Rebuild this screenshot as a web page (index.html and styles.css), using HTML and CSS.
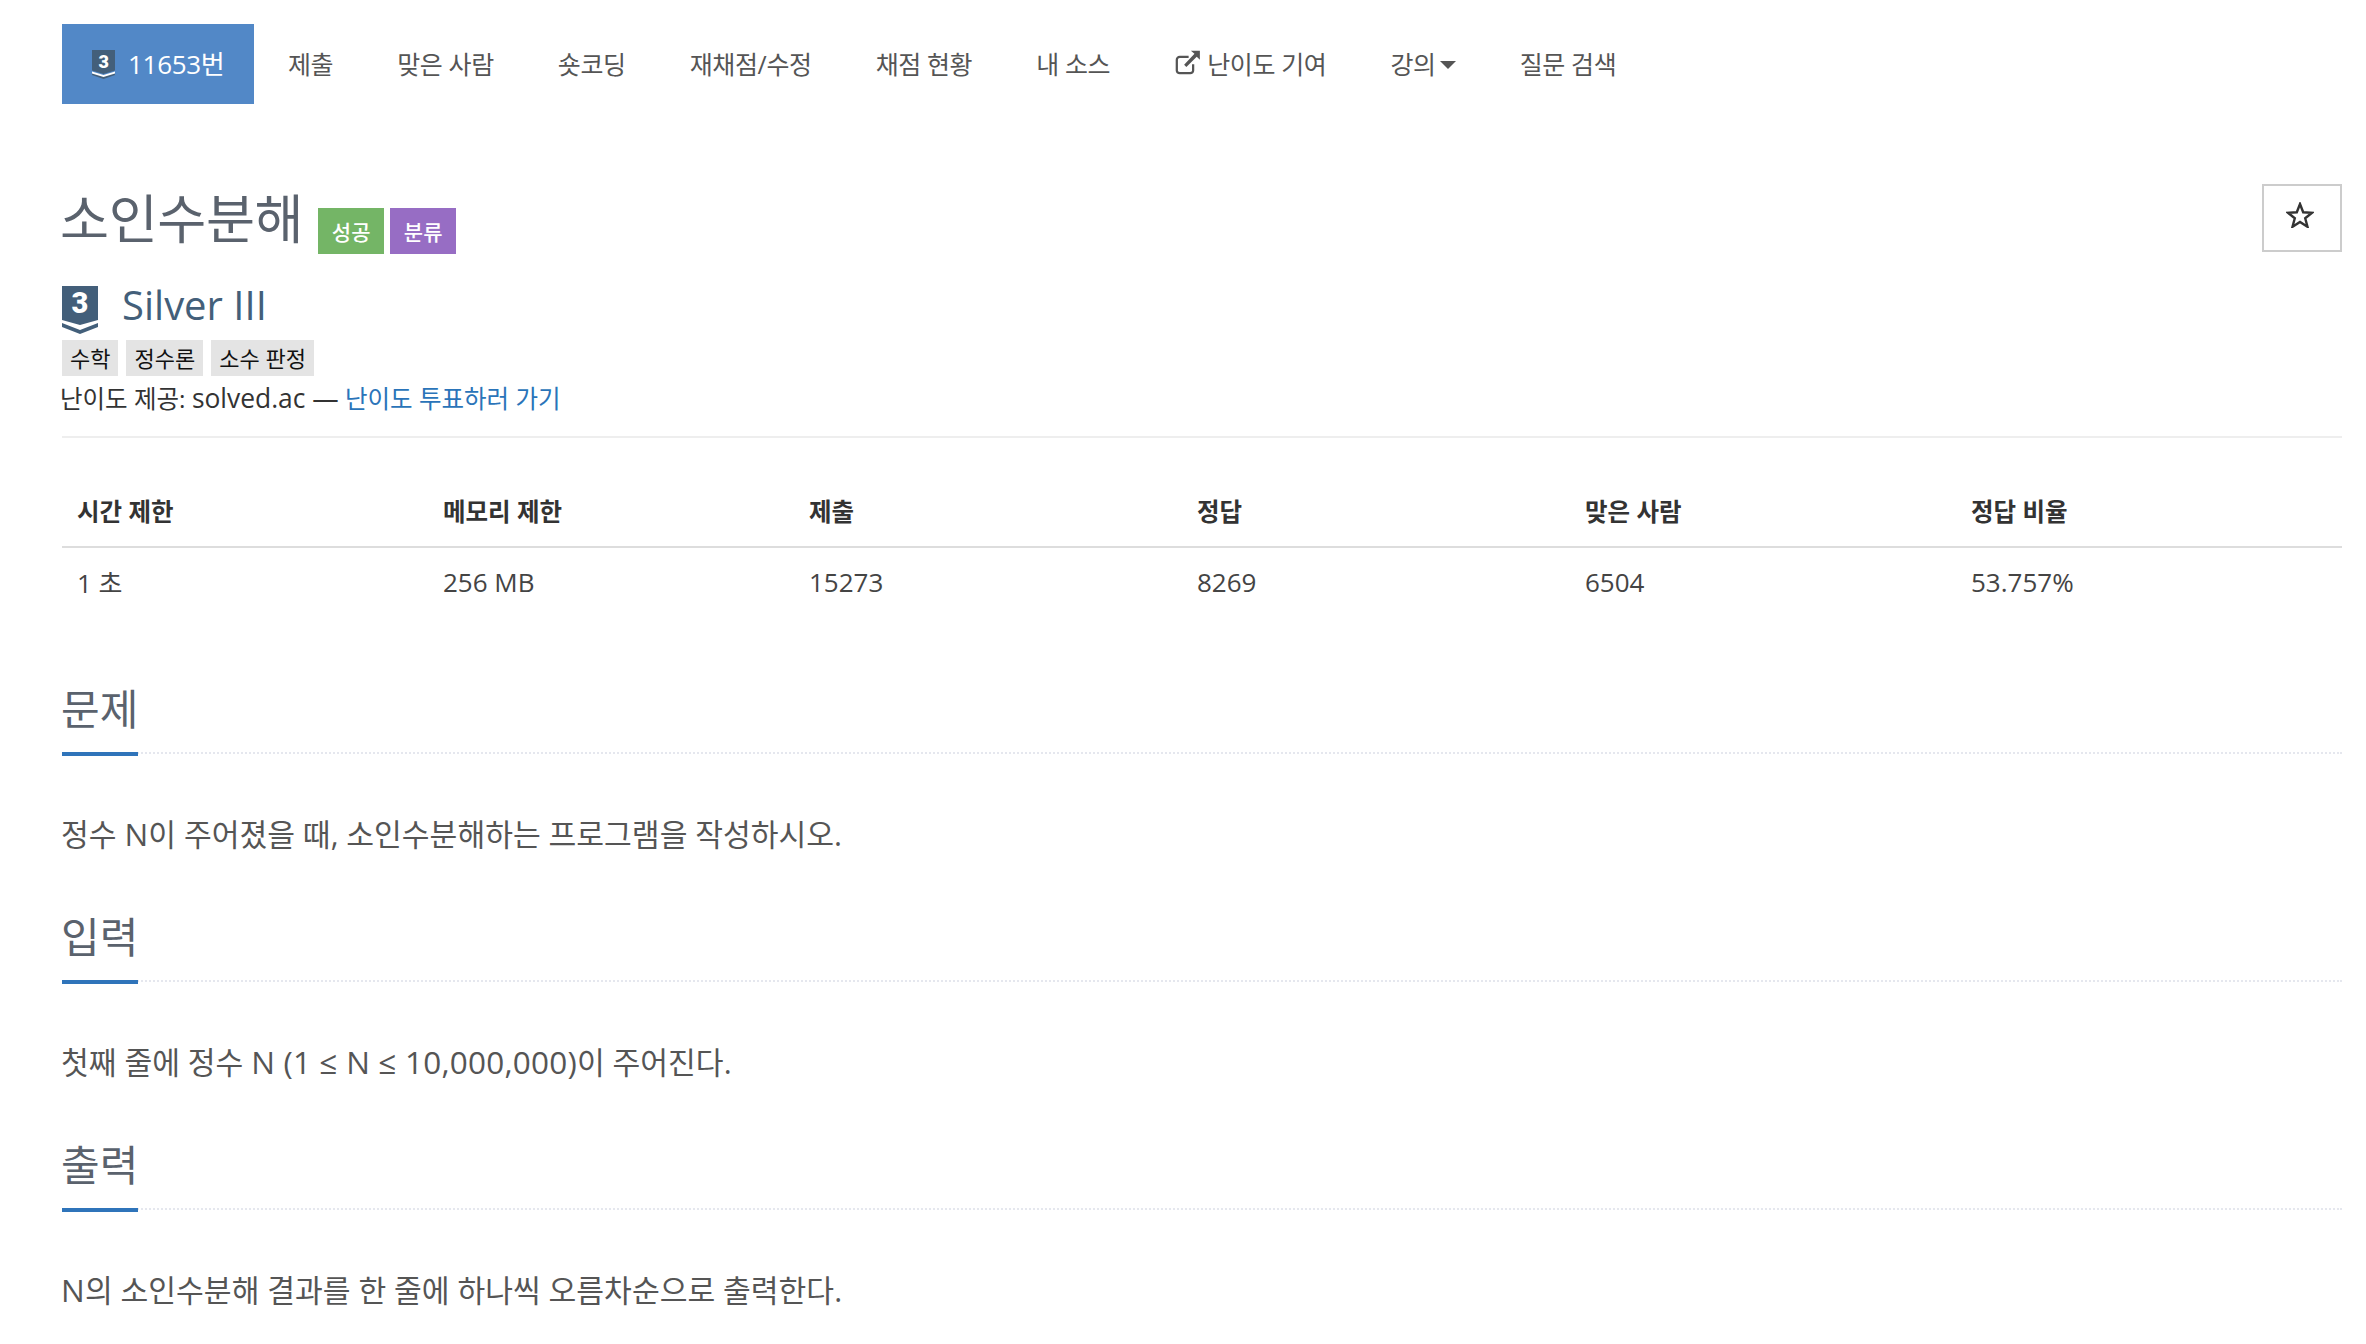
FILE: index.html
```html
<!DOCTYPE html>
<html lang="ko">
<head>
<meta charset="utf-8">
<title>소인수분해</title>
<link rel="stylesheet" href="styles.css">
</head>
<body>
<div class="page">
  <nav class="tabs">
    <a class="tab active"><svg class="tier-small" viewBox="0 0 23 29"><path d="M0 0H23V20.500L11.500 24L0 20.500Z" fill="#435f7a"/><path d="M0 22L11.500 25.500L23 22V25L11.500 29L0 25Z" fill="#435f7a"/><path d="M0 21.500L11.500 25L23 21.500V23.500L11.500 27L0 23.500Z" fill="#fff"/><text x="11.500" y="18" class="tier-num" font-size="18">3</text></svg><span>11653번</span></a>
    <a class="tab">제출</a>
    <a class="tab">맞은 사람</a>
    <a class="tab">숏코딩</a>
    <a class="tab">재채점/수정</a>
    <a class="tab">채점 현황</a>
    <a class="tab">내 소스</a>
    <a class="tab"><svg class="ext" viewBox="0 0 24 24"><path d="M17 13.500V19a2.500 2.500 0 0 1-2.500 2.500H5A2.500 2.500 0 0 1 2.500 19V9.500A2.500 2.500 0 0 1 5 7h8" fill="none" stroke="#555" stroke-width="2"/><path d="M15 1.500H23V9.500L20.200 6.800L11 16L9 14L18.200 4.300Z" fill="#555"/></svg><span>난이도 기여</span></a>
    <a class="tab">강의<span class="caret"></span></a>
    <a class="tab">질문 검색</a>
  </nav>

  <header class="title-row">
    <div class="title-wrap">
      <h1 class="title">소인수분해</h1>
      <span class="label green">성공</span>
      <span class="label purple">분류</span>
    </div>
    <button class="star" type="button" aria-label="즐겨찾기"><svg class="star-icon" viewBox="0 0 28 26"><path d="M14 2L17.200 10.300L26 10.800L19.200 16.300L21.500 24.800L14 20L6.500 24.800L8.800 16.300L2 10.800L10.800 10.300Z" fill="none" stroke="#333" stroke-width="2.400" stroke-linejoin="miter"/></svg></button>
  </header>

  <div class="tier-row">
    <svg class="tier-big" viewBox="0 0 36 48"><path d="M0 0H36V34L18 39L0 34Z" fill="#435f7a"/><path d="M0 37L18 44L36 37V41L18 48L0 41Z" fill="#435f7a"/><text x="18" y="27" class="tier-num" font-size="29">3</text></svg>
    <span class="tier-name">Silver III</span>
  </div>
  <div class="tags">
    <span class="tag">수학</span>
    <span class="tag">정수론</span>
    <span class="tag">소수 판정</span>
  </div>
  <p class="credit">난이도 제공: <span class="credit-latin">solved.ac —</span> <a class="link">난이도 투표하러 가기</a></p>

  <table class="stats">
    <thead>
      <tr><th class="c1">시간 제한</th><th class="c2">메모리 제한</th><th class="c3">제출</th><th class="c4">정답</th><th class="c5">맞은 사람</th><th>정답 비율</th></tr>
    </thead>
    <tbody>
      <tr><td>1 초</td><td>256 MB</td><td>15273</td><td>8269</td><td>6504</td><td>53.757%</td></tr>
    </tbody>
  </table>

  <section class="section first">
    <div class="headline"><h2>문제</h2></div>
    <p>정수 <span class="latin">N</span>이 주어졌을 때, 소인수분해하는 프로그램을 작성하시오.</p>
  </section>
  <section class="section">
    <div class="headline"><h2>입력</h2></div>
    <p>첫째 줄에 정수 <span class="latin">N (1 ≤ N ≤ 10,000,000)</span>이 주어진다.</p>
  </section>
  <section class="section">
    <div class="headline"><h2>출력</h2></div>
    <p><span class="latin">N</span>의 소인수분해 결과를 한 줄에 하나씩 오름차순으로 출력한다.</p>
  </section>
</div>
</body>
</html>
```
FILE: styles.css
```css
* { box-sizing: border-box; }
html, body { margin: 0; background: #fff; }
body {
  font-family: "Open Sans", "Noto Sans CJK KR", sans-serif;
  font-size: 24px;
  color: #333;
  height: 1344px;
  overflow: hidden;
}
.page { padding: 24px 24px 0 62px; }

.tabs { display: flex; height: 80px; margin-bottom: 80px; }
.tab {
  display: flex;
  align-items: center;
  padding: 0 32px 2px;
  color: #555;
  font-size: 25px;
  white-space: nowrap;
  letter-spacing: -0.38px;
}
.tab.active { background: #5288c7; color: #fff; font-size: 26px; padding: 0 30px 2px 30px; width: 192px; margin-right: 2px; letter-spacing: -0.3px; }
.tier-small { width: 23px; height: 29px; margin: 3px 13px 0 0; flex: none; }
.tier-num { fill: #fff; font-family: "Roboto", sans-serif; font-weight: 900; text-anchor: middle; }
.ext { width: 27px; height: 27px; margin-right: 6px; margin-bottom: 2px; }
.caret {
  width: 0; height: 0;
  margin: 4px 0 0 4px;
  border-top: 8px solid #555;
  border-left: 8px solid transparent;
  border-right: 8px solid transparent;
}

.title-row { display: flex; justify-content: space-between; align-items: flex-start; height: 102px; }
.title-wrap { display: flex; align-items: flex-start; }
.title {
  margin: 5px 15px 0 -2px;
  font-size: 53.3px;
  line-height: 60px;
  font-weight: 400;
  color: #5a626d;
  letter-spacing: -0.4px;
}
.label {
  width: 66px;
  height: 46px;
  margin: 24px 6px 0 0;
  display: flex;
  align-items: center;
  justify-content: center;
  color: #fff;
  font-size: 21px;
  font-weight: 500;
}
.green { background: #74b566; }
.purple { background: #976dc4; }
.star {
  width: 80px;
  height: 68px;
  margin: 0;
  padding: 0 4px 6px 0;
  background: #fff;
  border: 2px solid #ccc;
  display: flex;
  align-items: center;
  justify-content: center;
}
.star-icon { width: 28px; height: 26px; }

.tier-row { display: flex; align-items: flex-start; height: 48px; }
.tier-big { width: 36px; height: 48px; display: block; }
.tier-name { margin-left: 24px; font-size: 40px; line-height: 38px; color: #435f7a; }
.tags { display: flex; gap: 8px; margin-top: 6px; }
.tag {
  background: #e4e4e4;
  color: #111;
  height: 36px;
  line-height: 36px;
  padding: 0 8px;
  font-size: 22px;
}
.credit { margin: 5px 0 0; font-size: 24.5px; line-height: 35px; color: #333; padding-bottom: 20px; border-bottom: 2px solid #eee; text-indent: -2px; }
.credit-latin { font-size: 26.4px; }
.link { color: #2a74b9; }

.stats { width: 100%; border-collapse: collapse; margin-top: 43px; table-layout: fixed; }
.stats th, .stats td { text-align: left; padding: 0 15px; }
.stats th { font-size: 24.5px; font-weight: 700; height: 66px; padding-bottom: 6px; border-bottom: 2px solid #ddd; color: #333; }
.stats td { font-size: 26px; height: 68px; color: #444; }
.c1, .c2 { width: 366px; }
.c3, .c4 { width: 388px; }
.c5 { width: 386px; }

.section.first { margin-top: 77px; }
.headline { height: 62px; border-bottom: 2px dotted #e5e7ee; display: flex; }
.headline h2 {
  margin: 0;
  height: 64px;
  width: 76px;
  font-size: 42px;
  font-weight: 400;
  line-height: 34px;
  color: #5a626d;
  border-bottom: 4px solid #2f74ba;
  white-space: nowrap;
  text-indent: -1px;
}
.section p { margin: 0 0 0 -1px; font-size: 30.2px; line-height: 40px; color: #555; padding: 61px 0 65px; }
.latin { font-size: 31.5px; letter-spacing: 0.2px; line-height: 1; }
```
